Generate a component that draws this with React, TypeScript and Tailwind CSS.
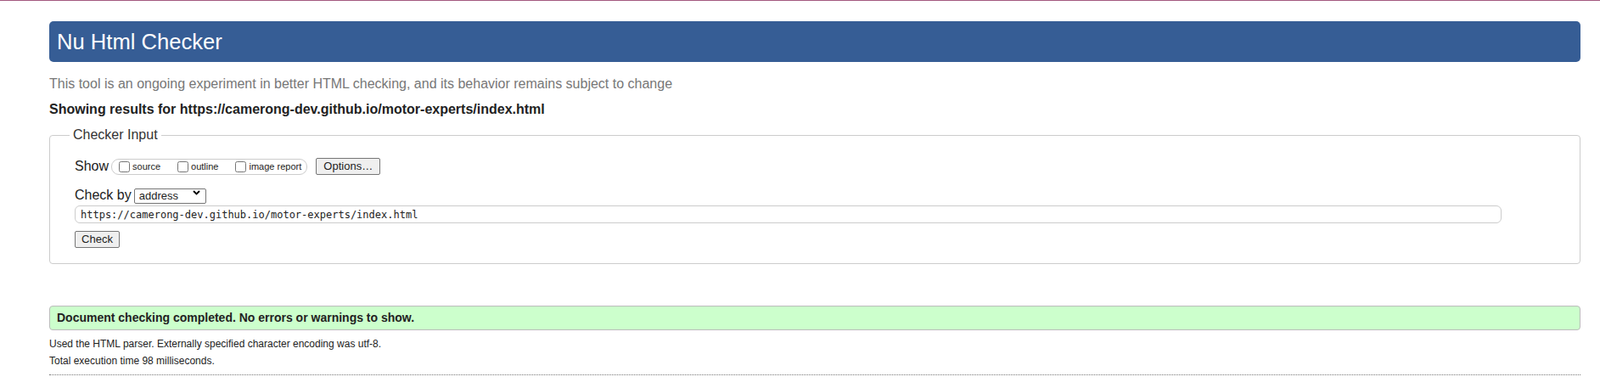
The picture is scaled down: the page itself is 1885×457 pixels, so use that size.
import React from "react";

const url = "https://camerong-dev.github.io/motor-experts/index.html";

const ShowOption = ({ label, last }: { label: string; last?: boolean }) => (
  <label className={`flex items-center ${last ? "" : "mr-[20px]"}`}>
    <input type="checkbox" className="m-0 h-[13px] w-[13px]" />
    <span className="ml-[3px] text-[11px] leading-[13px]">{label}</span>
  </label>
);

const App = () => {
  return (
    <div className="min-h-screen bg-white font-['Liberation_Sans',Arial,sans-serif] text-[#222]">
      <div className="h-px bg-[#a3597f]" />
      <div className="pl-[58px] pr-[23px]">
        <h1 className="mt-[24px] flex h-[48px] items-center rounded-[5px] bg-[#365d95] pl-[9px] text-[25.6px] font-normal text-white">
          Nu Html Checker
        </h1>
        <p className="mt-[16px] text-[16px] leading-[20px] text-[#777]">
          This tool is an ongoing experiment in better HTML checking, and its
          behavior remains subject to change
        </p>
        <p className="mt-[10px] text-[16px] font-bold leading-[20px]">
          Showing results for {url}
        </p>

        <fieldset className="mt-[11px] rounded-[4px] border border-[#ccc] pb-[18px] pl-[29px] pt-[18px]">
          <legend className="ml-[-6px] px-[4px] text-[16px] leading-[18px] text-[#333]">
            Checker Input
          </legend>

          {/* show options */}
          <div className="flex h-[20px] items-center">
            <span className="text-[16px] leading-[20px]">Show</span>
            <div className="ml-[3px] flex h-[19px] items-center rounded-[9px] border border-[#ccc] pl-[8px] pr-[6px]">
              <ShowOption label="source" />
              <ShowOption label="outline" />
              <ShowOption label="image report" last />
            </div>
            <button
              type="button"
              className="ml-[10px] h-[20px] w-[76px] rounded-[2px] border border-[#767676] bg-[#efefef] text-[13px] leading-[18px]"
            >
              Options…
            </button>
          </div>

          {/* check by */}
          <div className="mt-[15px] flex h-[18px] items-center">
            <span className="text-[16px] leading-[18px]">Check by</span>
            <div className="relative ml-[3px]">
              <select className="h-[18px] w-[85px] appearance-none rounded-[2px] border border-[#767676] bg-white pl-[5px] text-[13px] leading-[16px]">
                <option>address</option>
              </select>
              <svg
                className="pointer-events-none absolute right-[7px] top-[6px]"
                width="9"
                height="6"
                viewBox="0 0 9 6"
                fill="none"
              >
                <path d="M1 1l3.5 3.5L8 1" stroke="#000" strokeWidth="1.8" />
              </svg>
            </div>
          </div>

          <input
            type="text"
            readOnly
            defaultValue={url}
            className="mt-[3px] block h-[21px] w-[1681px] rounded-[6px] border border-[#ccc] bg-white pl-[6px] font-['DejaVu_Sans_Mono',monospace] text-[12px] text-[#222]"
          />

          <button
            type="button"
            className="mt-[9px] block h-[20px] w-[53px] rounded-[2px] border border-[#767676] bg-[#efefef] text-[13px] leading-[18px]"
          >
            Check
          </button>
        </fieldset>

        <div className="mt-[49px] flex h-[29px] items-center rounded-[4px] border border-[#bbb] bg-[#ccffcc] pl-[8px] text-[14px] font-bold">
          Document checking completed. No errors or warnings to show.
        </div>

        <p className="mt-[6px] text-[12px] leading-[20px]">
          Used the HTML parser. Externally specified character encoding was
          utf-8.
        </p>
        <p className="text-[12px] leading-[20px]">
          Total execution time 98 milliseconds.
        </p>
        <div className="mt-[6px] border-t border-dotted border-[#777]" />
      </div>
    </div>
  );
};

export default App;
